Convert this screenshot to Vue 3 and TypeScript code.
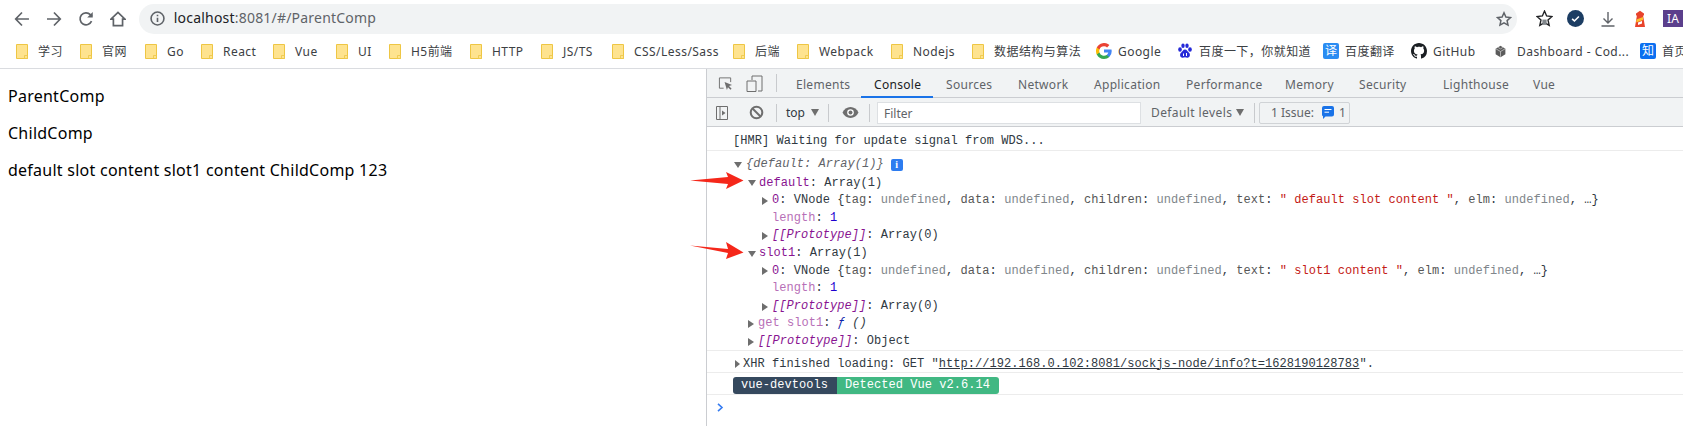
<script setup lang="ts">
interface Bookmark { label: string; icon: string; width: number }
interface Tab { label: string; width: number; active?: boolean }
interface Token { t: string; c?: string }
interface Row { indent: string; arrow?: 'open' | 'closed'; tokens: Token[] }

const bookmarks: Bookmark[] = [
  { label: '学习', icon: 'folder', width: 64 },
  { label: '官网', icon: 'folder', width: 65 },
  { label: 'Go', icon: 'folder', width: 56 },
  { label: 'React', icon: 'folder', width: 72 },
  { label: 'Vue', icon: 'folder', width: 63 },
  { label: 'UI', icon: 'folder', width: 53 },
  { label: 'H5前端', icon: 'folder', width: 81 },
  { label: 'HTTP', icon: 'folder', width: 71 },
  { label: 'JS/TS', icon: 'folder', width: 71 },
  { label: 'CSS/Less/Sass', icon: 'folder', width: 121 },
  { label: '后端', icon: 'folder', width: 64 },
  { label: 'Webpack', icon: 'folder', width: 94 },
  { label: 'Nodejs', icon: 'folder', width: 81 },
  { label: '数据结构与算法', icon: 'folder', width: 124 },
  { label: 'Google', icon: 'google', width: 81 },
  { label: '百度一下，你就知道', icon: 'baidu', width: 146 },
  { label: '百度翻译', icon: 'fanyi', width: 88 },
  { label: 'GitHub', icon: 'github', width: 83 },
  { label: 'Dashboard - Cod...', icon: 'box', width: 146 },
  { label: '首页', icon: 'zhihu', width: 43 },
]

const tabs: Tab[] = [
  { label: 'Elements', width: 78 },
  { label: 'Console', width: 72, active: true },
  { label: 'Sources', width: 72 },
  { label: 'Network', width: 76 },
  { label: 'Application', width: 92 },
  { label: 'Performance', width: 99 },
  { label: 'Memory', width: 74 },
  { label: 'Security', width: 84 },
  { label: 'Lighthouse', width: 90 },
  { label: 'Vue', width: 40 },
]

const vnodeHead: Token[] = [
  { t: '0', c: 'key' }, { t: ': VNode {' },
  { t: 'tag', c: 'prop' }, { t: ': ' }, { t: 'undefined', c: 'undef' }, { t: ', ' },
  { t: 'data', c: 'prop' }, { t: ': ' }, { t: 'undefined', c: 'undef' }, { t: ', ' },
  { t: 'children', c: 'prop' }, { t: ': ' }, { t: 'undefined', c: 'undef' }, { t: ', ' },
  { t: 'text', c: 'prop' }, { t: ': ' },
]
const vnodeTail: Token[] = [
  { t: ', ' }, { t: 'elm', c: 'prop' }, { t: ': ' }, { t: 'undefined', c: 'undef' }, { t: ', …}' },
]
const lengthRow: Row = { indent: 'i3', tokens: [{ t: 'length', c: 'dim' }, { t: ': ' }, { t: '1', c: 'num' }] }
const protoRow: Row = {
  indent: 'i2', arrow: 'closed',
  tokens: [{ t: '[[Prototype]]', c: 'key ital' }, { t: ': Array(0)' }],
}

const rows: Row[] = [
  { indent: 'i1', arrow: 'open', tokens: [{ t: 'default', c: 'key' }, { t: ': Array(1)' }] },
  { indent: 'i2', arrow: 'closed', tokens: [...vnodeHead, { t: '" default slot content "', c: 'str' }, ...vnodeTail] },
  lengthRow,
  protoRow,
  { indent: 'i1', arrow: 'open', tokens: [{ t: 'slot1', c: 'key' }, { t: ': Array(1)' }] },
  { indent: 'i2', arrow: 'closed', tokens: [...vnodeHead, { t: '" slot1 content "', c: 'str' }, ...vnodeTail] },
  lengthRow,
  protoRow,
  { indent: 'i1', arrow: 'closed', tokens: [{ t: 'get slot1', c: 'dim' }, { t: ': ' }, { t: 'ƒ', c: 'fn' }, { t: ' ()', c: 'ital' }] },
  { indent: 'i1', arrow: 'closed', tokens: [{ t: '[[Prototype]]', c: 'key ital' }, { t: ': Object' }] },
]
</script>

<template>
  <div class="screen">
    <header class="nav">
      <svg class="nav-ico back" viewBox="0 0 16 16"><path d="M15 8H2M8 1.5 1.7 8 8 14.5" /></svg>
      <svg class="nav-ico forward" viewBox="0 0 16 16"><path d="M1 8h13M8 1.5 14.3 8 8 14.5" /></svg>
      <svg class="nav-ico reload" viewBox="0 0 16 16"><path d="M13.6 10.2A6 6 0 1 1 12.4 3.6L14 5" /><path class="solid" d="M14.8 1v5.6H9.2z" /></svg>
      <svg class="nav-ico home" viewBox="0 0 16 16"><path d="M1 8.2 8 1.4l7 6.8h-2.4v6.4H3.4V8.2z" /></svg>
      <div class="address">
        <svg class="info" viewBox="0 0 14 14"><circle cx="7" cy="7" r="6" /><path d="M7 6.2v4M7 3.6v1.4" /></svg>
        <span class="url"><span class="host">localhost</span>:8081/#/ParentComp</span>
        <svg class="star" viewBox="0 0 16 16"><path d="m8 1.8 1.9 4.2 4.6.5-3.4 3.1.9 4.5L8 11.8l-4 2.3.9-4.5-3.4-3.1 4.6-.5z" /></svg>
      </div>
      <svg class="ext ext-star" viewBox="0 0 16 16"><path class="star-line" d="m8 1 2 4.6 5 .5-3.7 3.3 1.1 5L8 11.8l-4.400 2.600 1.100-5L1 6.100l5-.5z" /><path class="star-fill" d="M6 9h4v5H6z" /></svg>
      <svg class="ext ext-check" viewBox="0 0 16 16"><circle cx="8" cy="8" r="8" /><path d="m4.800 8.300 2.200 2 4.200-4.200" /></svg>
      <svg class="ext ext-down" viewBox="0 0 16 16"><path d="M8 1v10.500M3.500 7.500 8 12l4.500-4.500M1.500 15h13" /></svg>
      <svg class="ext ext-house" viewBox="0 0 14 18">
        <path class="h-red" d="M4 5h6l2 12H2z" /><path class="h-red" d="M3 3.500 7 .8l4 2.700v2H3z" />
        <path class="h-yel" d="M3.500 9.500 10 7v3l-6.800 2.500z" /><path class="h-white" d="M5 12.500 9 11v2.500l-4 1.500z" />
      </svg>
      <span class="ext-ia">IA</span>
    </header>

    <nav class="bookmarks">
      <div v-for="b in bookmarks" :key="b.label" class="bm" :style="{ width: b.width + 'px' }">
        <span class="bm-icon" :class="'icon-' + b.icon">
          <svg v-if="b.icon === 'folder'" class="folder" viewBox="0 0 12 15">
            <path class="f-body" d="M.5.500h11v14H.500z" />
            <path class="f-notch" d="M8.500 11.500h3v3h-3z" />
          </svg>
          <svg v-else-if="b.icon === 'google'" class="fav" viewBox="0 0 16 16">
            <path fill="#4285f4" d="M15.700 8.200c0-.6-.1-1.100-.2-1.600H8v3h4.300a3.700 3.700 0 0 1-1.600 2.400v2h2.600a7.700 7.700 0 0 0 2.400-5.800z" />
            <path fill="#34a853" d="M8 16c2.200 0 4-.7 5.300-2l-2.600-2a4.800 4.800 0 0 1-7.200-2.500H.8v2A8 8 0 0 0 8 16z" />
            <path fill="#fbbc05" d="M3.500 9.500a4.800 4.800 0 0 1 0-3v-2H.8a8 8 0 0 0 0 7z" />
            <path fill="#ea4335" d="M8 3.200c1.200 0 2.300.4 3.100 1.200l2.300-2.300A8 8 0 0 0 .8 4.500l2.700 2A4.800 4.800 0 0 1 8 3.200z" />
          </svg>
          <svg v-else-if="b.icon === 'baidu'" class="fav" viewBox="0 0 16 16">
            <g fill="#2529d8">
              <ellipse cx="3" cy="6.500" rx="1.800" ry="2.200" /><ellipse cx="6" cy="2.800" rx="1.700" ry="2.200" />
              <ellipse cx="10" cy="2.800" rx="1.700" ry="2.200" /><ellipse cx="13" cy="6.500" rx="1.800" ry="2.200" />
              <path d="M8 6.500c-2 0-2.500 2-4 3.300-1.500 1.400-1.200 4.700 1.500 4.900 1 .1 1.700-.4 2.500-.4s1.500.5 2.500.4c2.700-.2 3-3.500 1.500-4.900C10.500 8.500 10 6.500 8 6.500z" />
            </g>
            <path fill="#fff" d="M6 10.500h1v2.500H6zM9 10h1v3H9z" />
          </svg>
          <span v-else-if="b.icon === 'fanyi'" class="tile tile-fanyi">译</span>
          <svg v-else-if="b.icon === 'github'" class="fav" viewBox="0 0 16 16">
            <path fill="#1b1f23" d="M8 0C3.580 0 0 3.580 0 8c0 3.540 2.290 6.530 5.470 7.590.4.070.55-.17.55-.38 0-.19-.01-.82-.01-1.490-2.010.37-2.530-.49-2.690-.94-.09-.23-.48-.94-.82-1.130-.28-.15-.68-.52-.01-.53.63-.01 1.080.58 1.230.82.720 1.210 1.870.87 2.330.66.070-.52.280-.87.510-1.070-1.780-.2-3.640-.89-3.640-3.950 0-.87.310-1.590.820-2.150-.08-.2-.36-1.020.08-2.120 0 0 .67-.21 2.200.82.640-.18 1.320-.27 2-.27s1.360.09 2 .27c1.530-1.040 2.200-.82 2.200-.82.440 1.100.16 1.920.08 2.120.51.560.82 1.270.82 2.150 0 3.070-1.870 3.750-3.650 3.950.29.250.54.730.54 1.480 0 1.070-.01 1.930-.01 2.200 0 .21.150.46.550.38A8.010 8.010 0 0 0 16 8c0-4.420-3.580-8-8-8z" />
          </svg>
          <svg v-else-if="b.icon === 'box'" class="fav-small" viewBox="0 0 16 16">
            <path fill="#5b5b5b" d="M8 1 14 4.500v7L8 15l-6-3.500v-7z" />
            <path class="box-line" d="M2.500 4.800 8 8l5.500-3.200M8 8v6.500M5 3l3 1.800L11 3" />
          </svg>
          <span v-else class="tile tile-zhihu">知</span>
        </span>
        <span class="bm-label">{{ b.label }}</span>
      </div>
    </nav>

    <main class="body">
      <section class="page">
        <p>ParentComp</p>
        <p>ChildComp</p>
        <p>default slot content slot1 content ChildComp 123</p>
      </section>

      <section class="devtools">
        <div class="tabbar">
          <svg class="tool inspect" viewBox="0 0 16 16">
            <path class="stroke" d="M6 13H1.500V2h12v4.500" /><path class="solid" d="m7 6.500 8 3-3.200 1.200 2.700 2.800-1.200 1.200-2.700-2.800L9.500 15z" />
          </svg>
          <svg class="tool device" viewBox="0 0 17 17">
            <path class="stroke" d="M6 5V1h10v15h-4" /><path class="stroke" d="M1 6h9v10.500H1z" />
          </svg>
          <i class="sep sep-tabs" />
          <div v-for="t in tabs" :key="t.label" class="tab" :class="{ active: t.active }" :style="{ width: t.width + 'px' }">{{ t.label }}</div>
        </div>

        <div class="toolbar">
          <svg class="tool sidebar" viewBox="0 0 12 14">
            <path class="stroke" d="M.5.500h11v13H.500zM4 .5v13" /><path class="solid" d="m6 4.500 3.500 2.500L6 9.500z" />
          </svg>
          <svg class="tool block" viewBox="0 0 15 15">
            <circle class="thick" cx="7.500" cy="7.500" r="5.800" /><path class="thick" d="m3.500 3.500 8 8" />
          </svg>
          <i class="sep sep-a" />
          <span class="ctx">top</span>
          <i class="caret caret-top" />
          <i class="sep sep-b" />
          <svg class="tool eye" viewBox="0 0 17 11">
            <path class="solid" d="M8.500 0C5 0 2 2.200.5 5.500 2 8.800 5 11 8.500 11s6.500-2.200 8-5.500C15 2.200 12 0 8.500 0z" />
            <circle cx="8.500" cy="5.500" r="3.300" fill="#fff" /><circle class="solid" cx="8.500" cy="5.500" r="2" />
          </svg>
          <i class="sep sep-c" />
          <div class="filter">Filter</div>
          <span class="levels">Default levels</span>
          <i class="caret caret-levels" />
          <i class="sep sep-d" />
          <div class="issues">
            <span>1 Issue:</span>
            <svg class="msg" viewBox="0 0 12 13"><path d="M2 0h8a2 2 0 0 1 2 2v6.500a2 2 0 0 1-2 2H3.500L1 13v-2.700A2 2 0 0 1 0 8.500V2a2 2 0 0 1 2-2z" /><path class="msg-l" d="M2.500 3.500h7M2.500 6.200h4.500" /></svg>
            <span>1</span>
          </div>
        </div>

        <div class="console">
          <div class="msg-row hmr">[HMR] Waiting for update signal from WDS...</div>

          <div class="msg-group">
            <div class="tree-row i0 head-row">
              <i class="tri open" />
              <span class="ital summary">{default: Array(1)}</span>
              <span class="info-badge">i</span>
            </div>
            <div v-for="(r, ri) in rows" :key="ri" class="tree-row" :class="r.indent">
              <i v-if="r.arrow" class="tri" :class="r.arrow" />
              <span v-for="(k, ki) in r.tokens" :key="ki" :class="k.c">{{ k.t }}</span>
            </div>
          </div>

          <div class="msg-row xhr">
            <i class="tri closed small" />
            <span>XHR finished loading: GET "<u>http://192.168.0.102:8081/sockjs-node/info?t=1628190128783</u>".</span>
          </div>

          <div class="msg-row vue-row">
            <span class="pill dark">vue-devtools</span><span class="pill green">Detected Vue v2.6.14</span>
          </div>

          <div class="prompt">
            <svg viewBox="0 0 7 9"><path d="m1 .8 4 3.700-4 3.700" /></svg>
          </div>
        </div>
      </section>
    </main>

    <svg class="arrows" viewBox="0 0 1683 426">
      <path d="M690 180.500 728 177l-2-5 17.500 8.500L726 189l2-5z" />
      <path d="m690 245.500 38 3.500-2-7 17.500 10.500L726 259l2-6z" />
    </svg>
  </div>
</template>

<style>
html, body { margin: 0; background: #fff; }
</style>

<style scoped>
.screen {
  position: relative;
  width: 1683px;
  height: 426px;
  overflow: hidden;
  display: flex;
  flex-direction: column;
  background: #fff;
  font-family: "Noto Sans", "Noto Sans CJK SC", sans-serif;
  color: #000;
}

/* browser nav */
.nav {
  height: 36px;
  display: flex;
  align-items: center;
  padding-top: 1px;
  box-sizing: border-box;
  flex: none;
}
.nav-ico { width: 16px; height: 16px; fill: none; stroke: #5f6368; stroke-width: 1.700; }
.nav-ico .solid { fill: #5f6368; stroke: none; }
.back { margin-left: 14px; }
.forward { margin-left: 16px; }
.reload { margin-left: 16px; }
.home { margin-left: 16px; }
.address {
  margin-left: 13px;
  width: 1382px;
  height: 30px;
  border-radius: 15px;
  background: #f1f3f4;
  display: flex;
  align-items: center;
}
.info { width: 15px; height: 15px; margin-left: 11px; fill: none; stroke: #5f6368; stroke-width: 1.500; }
.url { margin-left: 9px; padding-bottom: 2px; font-size: 14px; color: #5f6368; letter-spacing: .2px; }
.host { color: #202124; }
.star { width: 16px; height: 16px; margin-left: auto; margin-right: 5px; fill: none; stroke: #5f6368; stroke-width: 1.500; }
.ext { flex: none; }
.ext-star { width: 17px; height: 17px; margin-left: 19px; }
.star-line { fill: none; stroke: #202124; stroke-width: 1.300; }
.star-fill { fill: #80868b; }
.ext-check { width: 17px; height: 17px; margin-left: 14px; }
.ext-check circle { fill: #1c3d63; }
.ext-check path { fill: none; stroke: #fff; stroke-width: 1.500; }
.ext-down { width: 16px; height: 16px; margin-left: 16px; fill: none; stroke: #5f6368; stroke-width: 1.400; }
.ext-house { width: 14px; height: 18px; margin-left: 17px; }
.h-red { fill: #e8432b; }
.h-yel { fill: #fbc02d; }
.h-white { fill: #fff; }
.ext-ia {
  flex: none;
  width: 20px;
  height: 17px;
  margin-left: 16px;
  background: #5b3f8c;
  color: #fff;
  font-size: 12px;
  line-height: 17px;
  text-align: center;
}

/* bookmarks */
.bookmarks {
  height: 33px;
  flex: none;
  box-sizing: border-box;
  display: flex;
  align-items: center;
  padding: 0 0 2px 16px;
  border-bottom: 1px solid #dadce0;
  white-space: nowrap;
}
.bm { flex: none; display: flex; align-items: center; }
.bm-icon { flex: none; width: 16px; height: 16px; margin-right: 6px; display: flex; align-items: center; }
.icon-box { margin-right: 7px; }
.folder { width: 12px; height: 15px; }
.f-body { fill: #fee38f; stroke: #eec644; }
.f-notch { fill: #fee38f; stroke: #eec644; stroke-width: .8; }
.fav { width: 16px; height: 16px; }
.fav-small { width: 13px; height: 13px; }
.box-line { fill: none; stroke: #ddd; stroke-width: .8; }
.tile {
  width: 16px;
  height: 16px;
  border-radius: 2px;
  color: #fff;
  font-size: 12px;
  line-height: 16px;
  text-align: center;
}
.tile-fanyi { background: #2a8cf2; }
.tile-zhihu { background: #0b6ff0; }
.bm-label { font-size: 12px; color: #3c4043; letter-spacing: .45px; }

/* body */
.body { flex: 1; display: flex; min-height: 0; }
.page { width: 706px; flex: none; padding: 17px 8px 0; box-sizing: border-box; }
.page p { margin: 0 0 16px; font-size: 16px; letter-spacing: .25px; line-height: 21px; color: #000; white-space: nowrap; }

.devtools { flex: 1; display: flex; flex-direction: column; border-left: 1px solid #cbcdd1; min-width: 0; }

.tabbar {
  height: 29px;
  flex: none;
  box-sizing: border-box;
  background: #f1f3f4;
  border-bottom: 1px solid #cbcdd1;
  display: flex;
  align-items: center;
  white-space: nowrap;
}
.tool { flex: none; }
.tool .stroke { fill: none; stroke: #6e6e6e; stroke-width: 1; }
.tool .solid { fill: #6e6e6e; }
.tool .thick { fill: none; stroke: #6e6e6e; stroke-width: 2; }
.inspect { width: 15px; height: 15px; margin-left: 11px; }
.device { width: 17px; height: 17px; margin-left: 13px; }
.sep { flex: none; width: 1px; height: 18px; background: #c8cacd; }
.sep-tabs { margin: 0 19px 0 13px; }
.tab {
  position: relative;
  flex: none;
  height: 28px;
  box-sizing: border-box;
  padding-top: 3px;
  font-size: 12px;
  color: #5f6368;
  letter-spacing: .3px;
  line-height: 26px;
}
.tab.active { color: #202124; }
.tab.active::after {
  content: "";
  position: absolute;
  left: -13px;
  width: 72px;
  bottom: -1px;
  height: 2px;
  background: #1a73e8;
}

.toolbar {
  height: 29px;
  flex: none;
  box-sizing: border-box;
  background: #f1f3f4;
  border-bottom: 1px solid #cbcdd1;
  padding-top: 1px;
  display: flex;
  align-items: center;
  white-space: nowrap;
  font-size: 12px;
  color: #5f6368;
}
.sidebar { width: 12px; height: 14px; margin-left: 9px; }
.block { width: 15px; height: 15px; margin-left: 21px; }
.sep-a { margin-left: 12px; }
.ctx { width: 19px; margin-left: 9px; color: #303942; }
.caret { flex: none; width: 0; height: 0; border-left: 4px solid transparent; border-right: 4px solid transparent; border-top: 7px solid #6e6e6e; }
.caret-top { margin-left: 6px; }
.sep-b { margin-left: 9px; }
.eye { width: 17px; height: 11px; margin-left: 13px; }
.sep-c { margin-left: 10px; }
.filter {
  width: 264px;
  height: 22px;
  margin-left: 7px;
  box-sizing: border-box;
  background: #fff;
  border: 1px solid #dde0e3;
  padding-left: 6px;
  line-height: 21px;
  color: #5f6368;
}
.levels { width: 80px; margin-left: 10px; letter-spacing: .4px; }
.caret-levels { margin-left: 5px; }
.sep-d { margin-left: 10px; height: 20px; }
.issues {
  width: 91px;
  height: 22px;
  margin-left: 4px;
  box-sizing: border-box;
  border: 1px solid #d0d3d6;
  border-radius: 2px;
  padding-left: 11px;
  display: flex;
  align-items: center;
  color: #5f6368;
}
.msg { width: 12px; height: 13px; margin: 0 5px 0 8px; }
.msg path { fill: #1a73e8; }
.msg .msg-l { fill: none; stroke: #fff; stroke-width: 1; }

/* console */
.console {
  flex: 1;
  font-family: "Liberation Mono", monospace;
  font-size: 12px;
  letter-spacing: .05px;
  color: #303942;
  white-space: pre;
}
.msg-row { border-bottom: 1px solid #ececec; box-sizing: border-box; display: flex; align-items: center; }
.hmr { height: 24px; padding: 5px 0 0 26px; }
.msg-group { height: 200px; box-sizing: border-box; padding-top: 4px; border-bottom: 1px solid #ececec; }
.tree-row { height: 17.600px; line-height: 17.600px; display: flex; align-items: center; }
.head-row { height: 19.600px; }
.i0 { padding-left: 27px; }
.i1 { padding-left: 41px; }
.i2 { padding-left: 55px; }
.i3 { padding-left: 65px; }
.tri { flex: none; width: 0; height: 0; display: block; }
.tri.open { border-left: 4px solid transparent; border-right: 4px solid transparent; border-top: 6px solid #6e6e6e; margin-right: 4px; }
.tri.closed { border-top: 4px solid transparent; border-bottom: 4px solid transparent; border-left: 6px solid #6e6e6e; margin-right: 4px; }
.i1 .tri.open { margin-right: 3px; }
.tri.small { border-top-width: 4px; border-bottom-width: 4px; border-left-width: 5px; margin-right: 3px; }
.summary { color: #5f6368; }
.ital { font-style: italic; }
.key { color: #881391; }
.dim { color: #b76fb7; }
.num { color: #1c00cf; }
.str { color: #c41a16; }
.undef { color: #80868b; }
.prop { color: #565656; }
.fn { color: #0d22aa; font-style: italic; }
.info-badge {
  width: 12px;
  height: 12px;
  margin-left: 7px;
  border-radius: 2px;
  background: #2d7cf0;
  color: #fff;
  font: bold 10px/12px "Liberation Serif", serif;
  text-align: center;
}
.xhr { height: 22px; padding: 4px 0 0 28px; }
.vue-row { height: 22px; padding: 4px 0 0 26px; }
.pill { height: 17px; line-height: 17px; font-weight: 400; }
.pill.dark { width: 104px; background: #35495e; color: #fff; border-radius: 3px 0 0 3px; padding-left: 8px; box-sizing: border-box; }
.pill.green { width: 162px; background: #41b883; color: #fff; border-radius: 0 3px 3px 0; padding-left: 8px; box-sizing: border-box; }
.prompt { padding: 8px 0 0 10px; height: 10px; }
.prompt svg { display: block; width: 7px; height: 9px; fill: none; stroke: #367cf1; stroke-width: 1.600; }

.arrows { position: absolute; inset: 0; width: 1683px; height: 426px; pointer-events: none; }
.arrows path { fill: #f5271a; }
</style>
